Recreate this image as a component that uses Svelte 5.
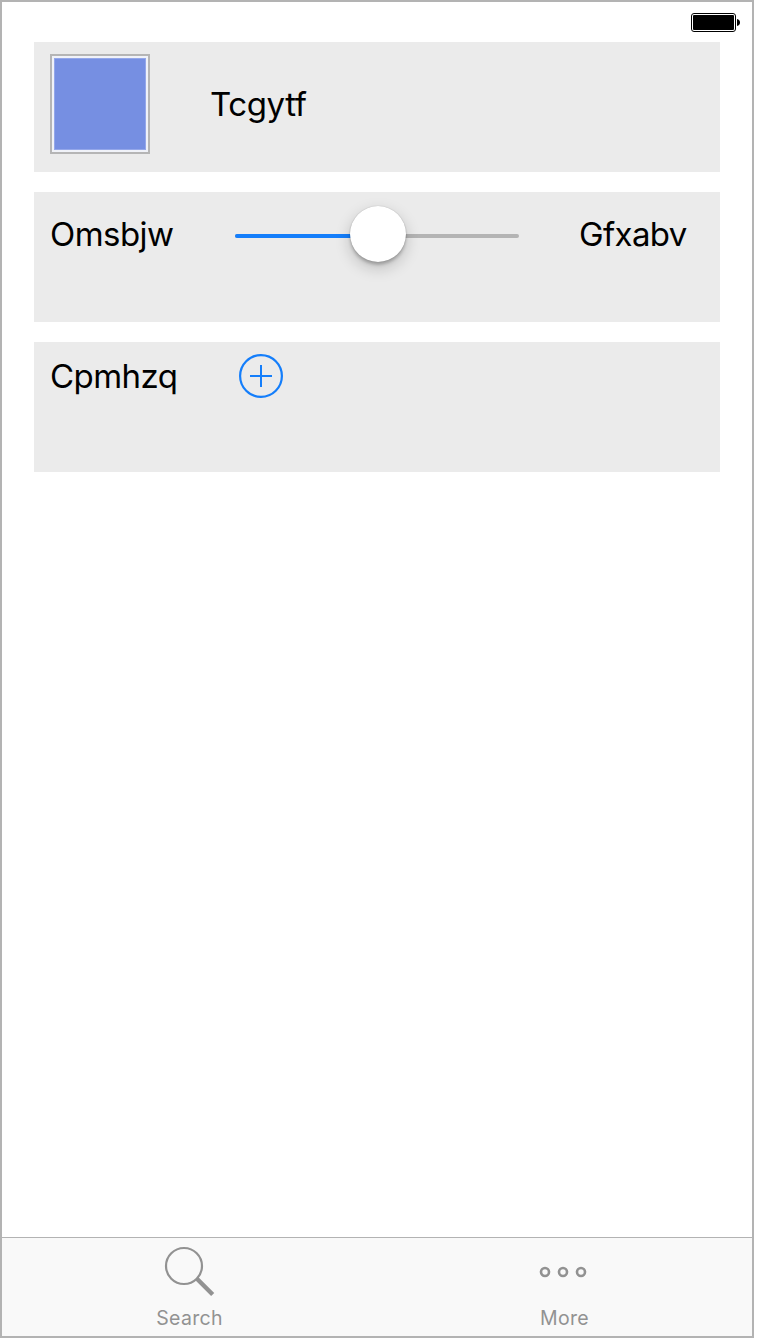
<script>
  let value = $state(50);
  const tabs = ['Search', 'More'];
</script>

<div class="screen">
  <header>
    <svg width="50" height="20" viewBox="0 0 50 20">
      <rect x="0.5" y="0.5" width="44" height="18" rx="2.5" fill="#fff" stroke="#000" />
      <rect x="2" y="2" width="41" height="15" rx="1" fill="#000" />
      <path d="M46 6Q49 6.8 49 9.5T46 13Z" fill="#000" />
    </svg>
  </header>

  <main>
    <section class="card first">
      <div class="swatch"><div class="fill"></div></div>
      <span class="label name">Tcgytf</span>
    </section>

    <section class="card second">
      <span class="label low">Omsbjw</span>
      <div class="slider">
        <div class="played" style="width: {value}%"></div>
        <div class="knob" style="left: {value}%"></div>
      </div>
      <span class="label high">Gfxabv</span>
    </section>

    <section class="card third">
      <span class="label add">Cpmhzq</span>
      <svg width="44" height="44" viewBox="0 0 44 44" fill="none" stroke="#147efb" stroke-width="2">
        <circle cx="22" cy="22" r="20.9" stroke-width="2.2" />
        <path d="M11 22H33M22 11V33" />
      </svg>
    </section>
  </main>

  <nav>
    {#each tabs as tab}
      <div class="tab">
        {#if tab === 'Search'}
          <svg width="52" height="52" viewBox="0 0 52 52" fill="none" stroke="#929292">
            <circle cx="20" cy="20" r="18" stroke-width="2.2" />
            <path d="M32.7 32.5L48.7 48.5" stroke-width="4.4" />
          </svg>
        {:else}
          <svg width="52" height="52" viewBox="0 0 52 52" fill="none" stroke="#929292" stroke-width="2.6">
            <circle cx="6" cy="26" r="4" />
            <circle cx="24" cy="26" r="4" />
            <circle cx="42" cy="26" r="4" />
          </svg>
        {/if}
        <span>{tab}</span>
      </div>
    {/each}
  </nav>
</div>

<style>
  :global(body) {
    background: #fff;
  }
  .screen {
    box-sizing: border-box;
    width: 754px;
    height: 1338px;
    border: 2px solid #b3b3b3;
    background: #fff;
    display: flex;
    flex-direction: column;
    font-family: Inter, sans-serif;
  }
  header {
    box-sizing: border-box;
    height: 40px;
    padding: 11px 11px 0 0;
    display: flex;
    justify-content: flex-end;
    align-items: flex-start;
  }
  svg {
    display: block;
    flex: none;
  }
  main {
    flex: 1;
    padding: 0 32px;
    display: flex;
    flex-direction: column;
    gap: 20px;
  }
  .card {
    box-sizing: border-box;
    height: 130px;
    background: #ebebeb;
    padding: 12px 16px;
    display: flex;
    align-items: flex-start;
  }
  .label {
    font-size: 33px;
    line-height: 42px;
    letter-spacing: -0.55px;
    white-space: nowrap;
    color: #000;
  }
  .swatch {
    box-sizing: border-box;
    width: 100px;
    height: 100px;
    border: 2px solid #b5b5b5;
    padding: 2px;
    background: #f0f2f8;
  }
  .fill {
    box-sizing: border-box;
    height: 92px;
    background: #768fe2;
    border: 1px solid #94a7ea;
  }
  .name {
    margin: 29px 0 0 60px;
    letter-spacing: -0.4px;
  }
  .low {
    width: 185px;
    margin-top: 9px;
  }
  .high {
    margin: 9px 0 0 60px;
    letter-spacing: -0.65px;
  }
  .add {
    width: 189px;
    margin-top: 1px;
  }
  .slider {
    position: relative;
    width: 284px;
    height: 4px;
    margin-top: 30px;
    border-radius: 2px;
    background: #b4b4b4;
  }
  .played {
    height: 4px;
    border-radius: 2px 0 0 2px;
    background: #147efb;
  }
  .knob {
    position: absolute;
    top: -28px;
    width: 56px;
    height: 56px;
    margin-left: -27px;
    border-radius: 50%;
    background: #fff;
    box-shadow: 0 0 1px rgba(0, 0, 0, 0.3), 0 3px 3px rgba(0, 0, 0, 0.2), 0 6px 16px rgba(0, 0, 0, 0.2);
  }
  nav {
    box-sizing: border-box;
    height: 99px;
    border-top: 1px solid #b3b3b3;
    background: #f9f9f9;
    display: flex;
    justify-content: space-between;
  }
  .tab {
    width: 375px;
    padding-top: 8px;
    display: flex;
    flex-direction: column;
    align-items: center;
    font-size: 19.5px;
    line-height: 24px;
    color: #929292;
    gap: 8px;
    letter-spacing: 0.3px;
  }
</style>
